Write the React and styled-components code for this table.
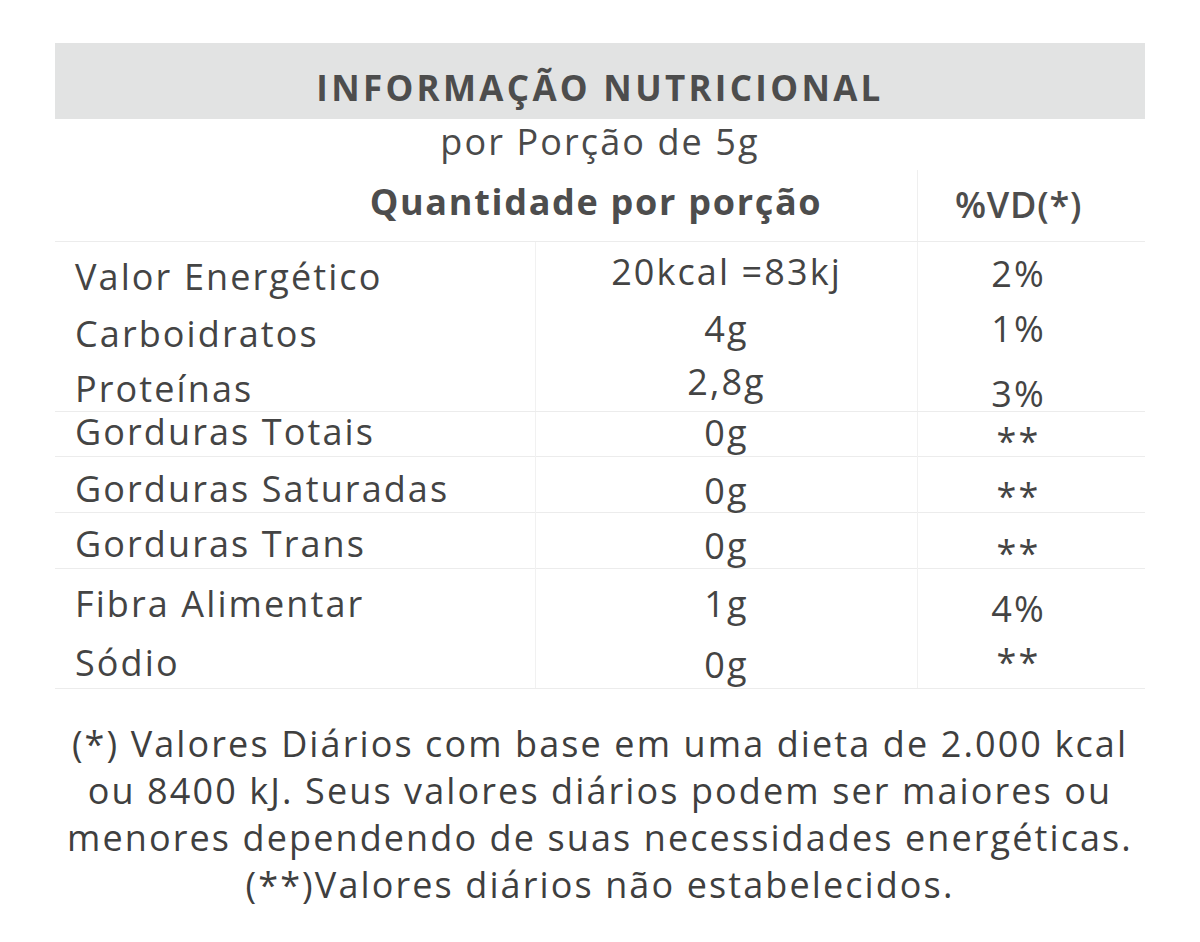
import React from "react";
import styled, { createGlobalStyle } from "styled-components";

const GlobalStyle = createGlobalStyle`
  * {
    box-sizing: border-box;
  }
  body {
    margin: 0;
    background: #ffffff;
    font-family: "Open Sans", "Liberation Sans", sans-serif;
    color: #454545;
  }
`;

const Panel = styled.div`
  width: 1090px;
  margin: 43px auto 0;
`;

const TitleBar = styled.div`
  height: 76px;
  padding-top: 25px;
  background: #e2e3e3;
  text-align: center;
  font-size: 35px;
  line-height: 40px;
  font-weight: 700;
  letter-spacing: 3.3px;
  color: #4d4d4d;
`;

const Serving = styled.div`
  height: 51px;
  padding-top: 3px;
  text-align: center;
  font-size: 36px;
  line-height: 40px;
  letter-spacing: 2.1px;
  color: #4a4a4a;
`;

const HeadRow = styled.div`
  display: grid;
  grid-template-columns: 862px 1fr;
  height: 72px;
  border-bottom: 1px solid #ececec;
`;

const HeadCell = styled.div`
  padding-top: ${(p) => p.$pt}px;
  padding-left: ${(p) => p.$pl || 0}px;
  padding-right: ${(p) => p.$pr || 0}px;
  text-align: center;
  font-size: 36px;
  line-height: 40px;
  font-weight: ${(p) => p.$weight};
  letter-spacing: ${(p) => p.$ls}px;
  color: #4d4d4d;
  border-left: ${(p) => (p.$divider ? "1px solid #efefef" : "none")};
`;

const Row = styled.div`
  display: grid;
  grid-template-columns: 480px 382px 1fr;
  height: ${(p) => p.$h}px;
  border-bottom: ${(p) => (p.$line ? "1px solid #ececec" : "none")};
`;

const Cell = styled.div`
  padding-top: ${(p) => p.$pt + 3}px;
  font-size: 36px;
  line-height: 34px;
  letter-spacing: 2.1px;
  white-space: nowrap;
  color: #444444;
`;

const LabelCell = styled(Cell)`
  padding-left: 20px;
`;

const ValueCell = styled(Cell)`
  text-align: center;
  border-left: 1px solid #f1f1f1;
`;

const VdCell = styled(Cell)`
  text-align: center;
  padding-right: 26px;
  border-left: 1px solid #f1f1f1;
`;

const Footer = styled.p`
  margin: 31px 0 0;
  text-align: center;
  font-size: 36px;
  line-height: 47px;
  letter-spacing: 2.1px;
  color: #3f3f3f;
`;

const rows = [
  { label: "Valor Energético", value: "20kcal =83kj", vd: "2%", h: 64, pt: [15, 10, 12] },
  { label: "Carboidratos", value: "4g", vd: "1%", h: 56, pt: [8, 3, 3] },
  { label: "Proteínas", value: "2,8g", vd: "3%", h: 50, pt: [7, 0, 12], line: true },
  { label: "Gorduras Totais", value: "0g", vd: "**", h: 45, pt: [0, 1, 9], line: true },
  { label: "Gorduras Saturadas", value: "0g", vd: "**", h: 56, pt: [12, 14, 19], line: true },
  { label: "Gorduras Trans", value: "0g", vd: "**", h: 56, pt: [11, 13, 20], line: true },
  { label: "Fibra Alimentar", value: "1g", vd: "4%", h: 61, pt: [15, 15, 20] },
  { label: "Sódio", value: "0g", vd: "**", h: 59, pt: [13, 15, 12], line: true },
];

const App = () => {
  return (
    <>
      <GlobalStyle />
      <Panel>
        <TitleBar>INFORMAÇÃO NUTRICIONAL</TitleBar>
        <Serving>por Porção de 5g</Serving>
        <HeadRow>
          <HeadCell $pt={12} $pl={220} $weight={700} $ls={1.7}>
            Quantidade por porção
          </HeadCell>
          <HeadCell $pt={15} $pr={26} $weight={600} $ls={0.8} $divider>
            %VD(*)
          </HeadCell>
        </HeadRow>
        {rows.map((row) => (
          <Row key={row.label} $h={row.h} $line={row.line}>
            <LabelCell $pt={row.pt[0]}>{row.label}</LabelCell>
            <ValueCell $pt={row.pt[1]}>{row.value}</ValueCell>
            <VdCell $pt={row.pt[2]}>{row.vd}</VdCell>
          </Row>
        ))}
        <Footer>
          (*) Valores Diários com base em uma dieta de 2.000 kcal
          <br />
          ou 8400 kJ. Seus valores diários podem ser maiores ou
          <br />
          menores dependendo de suas necessidades energéticas.
          <br />
          (**)Valores diários não estabelecidos.
        </Footer>
      </Panel>
    </>
  );
};

export default App;
